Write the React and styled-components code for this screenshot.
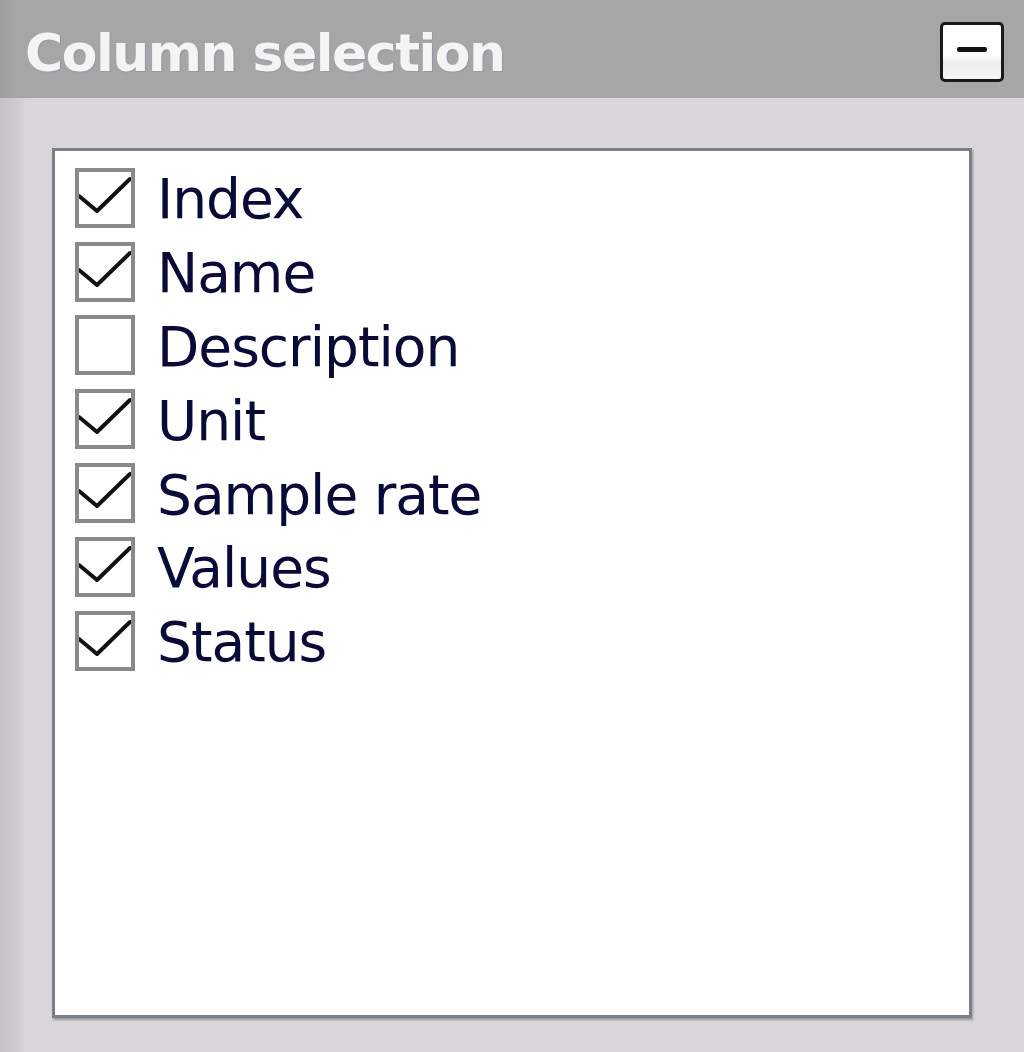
import styled, { createGlobalStyle } from "styled-components";

const columns = [
  { name: "Index", checked: true },
  { name: "Name", checked: true },
  { name: "Description", checked: false },
  { name: "Unit", checked: true },
  { name: "Sample rate", checked: true },
  { name: "Values", checked: true },
  { name: "Status", checked: true },
];

const Global = createGlobalStyle`
  html, body {
    margin: 0;
    padding: 0;
    background: #d8d6d9;
  }
`;

function Check({ checked }) {
  return (
    <Box>
      {checked && (
        <svg width="52" height="52" viewBox="0 0 52 52">
          <path d="M0 24 L18 39 L51 7" fill="none" stroke="#111" strokeWidth="4" strokeLinejoin="round" strokeLinecap="round" />
        </svg>
      )}
    </Box>
  );
}

export default function App() {
  return (
    <>
      <Global />
      <Panel>
        <Header>
          <Title>Column selection</Title>
          <Collapse aria-label="collapse">
            <Bar />
          </Collapse>
        </Header>
        <Body>
          <List>
            {columns.map((c) => (
              <Row key={c.name}>
                <Check checked={c.checked} />
                <Label>{c.name}</Label>
              </Row>
            ))}
          </List>
        </Body>
      </Panel>
    </>
  );
}

const Panel = styled.div`
  width: 1024px;
  height: 1052px;
  display: flex;
  flex-direction: column;
  background: linear-gradient(to right, #c4c2c5 0, #d0ced1 20px, #d8d6d9 26px);
  font-family: "DejaVu Sans", "Liberation Sans", sans-serif;
`;

const Header = styled.div`
  height: 98px;
  flex-shrink: 0;
  display: flex;
  align-items: center;
  justify-content: space-between;
  padding: 0 20px 0 25px;
  box-sizing: border-box;
  background: linear-gradient(to right, #9c9c9c 0, #a6a6a6 14px);
`;

const Title = styled.span`
  color: #f4f4f4;
  font-size: 52px;
  font-weight: bold;
  letter-spacing: -1.5px;
  margin-top: 8px;
  text-shadow: 1px 1px 1px rgba(120, 140, 170, 0.5);
`;

const Collapse = styled.button`
  width: 64px;
  height: 60px;
  margin-top: 6px;
  display: flex;
  align-items: center;
  justify-content: center;
  padding: 0;
  background: linear-gradient(#ffffff 0, #ffffff 55%, #ececec 70%, #f6f6f6 100%);
  border: 3px solid #1a1a1a;
  border-radius: 5px;
  box-sizing: border-box;
`;

const Bar = styled.span`
  width: 30px;
  height: 5px;
  margin-top: -6px;
  background: #111;
  border-radius: 2px;
`;

const Body = styled.div`
  flex: 1;
  padding: 50px 52px 34px 52px;
  box-sizing: border-box;
  display: flex;
`;

const List = styled.div`
  flex: 1;
  background: #fff;
  border: 3px solid #7a7f88;
  box-shadow: 1px 2px 2px rgba(90, 95, 105, 0.5);
  padding: 10px 20px;
  display: flex;
  flex-direction: column;
`;

const Row = styled.div`
  height: 73.8px;
  display: flex;
  align-items: center;
  gap: 22px;
`;

const Box = styled.div`
  width: 60px;
  height: 60px;
  box-sizing: border-box;
  border: 4px solid #8a8a8a;
  background: #fff;
  display: flex;
  align-items: center;
  justify-content: center;
  flex-shrink: 0;
`;

const Label = styled.span`
  font-size: 55px;
  color: #0a0a38;
  letter-spacing: -1px;
  line-height: 1;
  margin-top: 4px;
`;
